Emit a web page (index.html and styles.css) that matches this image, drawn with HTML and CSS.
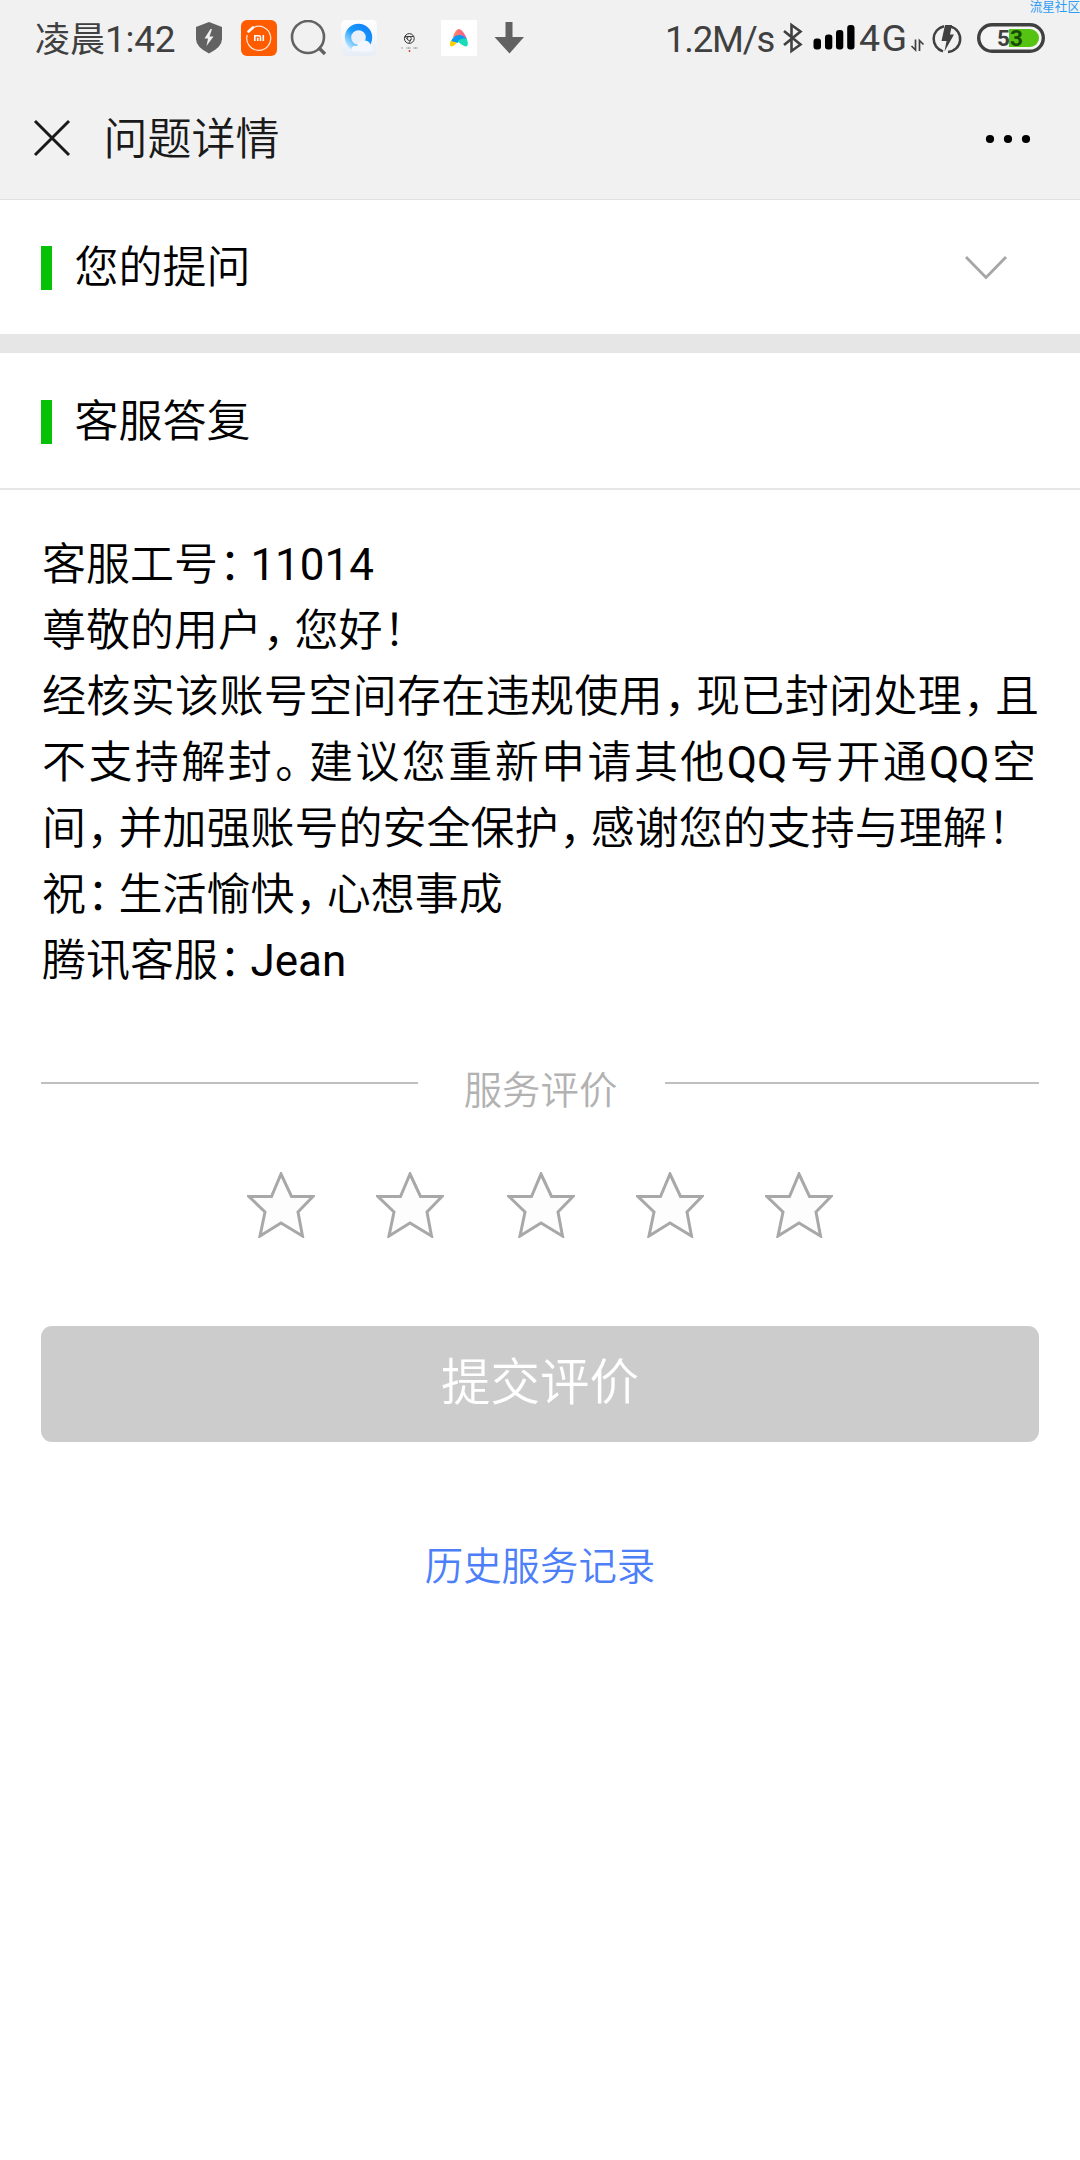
FILE: index.html
```html
<!DOCTYPE html>
<html lang="zh-CN">
<head>
<meta charset="utf-8">
<title>问题详情</title>
<link rel="stylesheet" href="styles.css">
</head>
<body>
<div class="status">
  <span class="time">凌晨<span class="digits">1:42</span></span>
  <svg class="tray" width="330" height="36" viewBox="195 20 330 36">
    <defs>
      <linearGradient id="ring" x1="1" y1="0" x2="0" y2="1"><stop offset="0" stop-color="#1282fb"/><stop offset=".5" stop-color="#189bfb"/><stop offset="1" stop-color="#c4ecff"/></linearGradient>
      <linearGradient id="tile" x1="0" y1="0" x2="0" y2="1"><stop offset="0" stop-color="#fff"/><stop offset="1" stop-color="#e8edf5"/></linearGradient>
      <linearGradient id="peak" x1="0" y1="0" x2="1" y2="0"><stop offset="0" stop-color="#ff8a5c"/><stop offset="1" stop-color="#f5559b"/></linearGradient>
    </defs>
    <path fill="#626262" d="M209 22 222 27V39Q222 47 209 53.500Q196 47 196 39V27Z"/>
    <path fill="#f1f1f1" d="M210.500 29 204.500 38.500H208L206.500 46 213.500 36.500H209.500L212 29Z"/>
    <rect x="241" y="20" width="36" height="36" rx="6" fill="#ff5c00"/>
    <path d="M253.500 27.500A12 12 0 1 1 247.200 35" fill="none" stroke="#ffe7d8" stroke-width="1.200"/>
    <path d="M248.500 31.500 253 27.500" stroke="#fff" stroke-width="2.600" stroke-linecap="round"/>
    <path d="M254.800 41V35.800H259Q260.500 35.800 260.500 37.300V41M257.700 37.800V41M263.300 35V41" fill="none" stroke="#fff" stroke-width="1.600"/>
    <circle cx="308" cy="37" r="16" fill="none" stroke="#626262" stroke-width="2.600"/>
    <path d="M318.500 47.500 325 54" stroke="#626262" stroke-width="3.400"/>
    <rect x="341" y="20" width="36" height="36" rx="5" fill="url(#tile)"/>
    <circle cx="358.500" cy="37.500" r="10.500" fill="#eaf0f8" stroke="url(#ring)" stroke-width="6.400"/>
    <path d="M354 51.500Q351 51 351.500 48Q353 45 357 46Q359 40 365 40.500Q370 41 370.500 45.500Q373 46.500 372.500 49.500Q371.500 51.500 369 51.500Z" fill="#f4f8fe"/>
    <g fill="none" stroke="#333"><circle cx="409.300" cy="38.500" r="4.900" stroke-width="1"/><circle cx="409.300" cy="38.500" r="2" stroke-width=".9"/><path d="M405 36.500H413.500M407.500 39.500 405.500 37M411 39.500 409 43" stroke-width=".9"/></g>
    <path d="M401.500 48H403M406.500 48H411M413.500 48H418" stroke="#999" stroke-width="1.500" stroke-dasharray="1 .5"/>
    <circle cx="409.500" cy="51" r=".9" fill="#d33"/>
    <rect x="441" y="20" width="36" height="36" fill="#fff"/>
    <path d="M453 37Q455.500 29 459 29Q462.500 29 467 39L460 37Z" fill="url(#peak)"/>
    <path d="M450.500 42.500Q453 35 459 35Q464 35 467 39.500Q462 38.500 457.500 43Z" fill="#0a9bf0"/>
    <path d="M450.500 41Q454 41.500 457 42.500Q454 46.500 451.500 46.500Q449 46 450.500 41Z" fill="#ffd000"/>
    <path d="M457.500 41Q462 37.500 466.500 38.500Q468.500 43 467.500 45.500Q466.500 47 464 46Q460 44 457.500 41Z" fill="#17dcb8"/>
    <path d="M505.500 22H512.500V37H524L509.500 53.500 494.500 37H505.500Z" fill="#626262"/>
  </svg>
  <span class="speed">1.2M/s</span>
  <svg class="radio" width="76" height="36" viewBox="781 20 76 36">
    <path d="M784 31 800.500 44.500 791.500 51V25L800.500 31.500 784 45" fill="none" stroke="#404040" stroke-width="2.600"/>
    <g fill="#000"><rect x="813.500" y="38.500" width="7.500" height="11" rx="3"/><rect x="825" y="34.500" width="7.300" height="15" rx="3"/><rect x="836" y="30" width="7.300" height="19.500" rx="3"/><rect x="847.200" y="25" width="7.300" height="24.500" rx="3"/></g>
  </svg>
  <span class="net">4G</span>
  <svg class="power" width="136" height="36" viewBox="910 20 136 36">
    <path d="M915.500 39.500V50L911.500 46M919.500 51V40.500L923.500 44.500" fill="none" stroke="#404040" stroke-width="1.700"/>
    <path d="M944 26.200A13 13 0 0 0 943 51.400M951 26.600A13 13 0 0 1 948 52" fill="none" stroke="#404040" stroke-width="2.500"/>
    <path d="M945 25H952L950 34.500H954L944.500 51.500 946.500 41H941.500Z" fill="#404040"/>
    <rect x="978.700" y="24.700" width="64.600" height="26.600" rx="13.300" fill="#f5f5f5" stroke="#404040" stroke-width="3.400"/>
    <path d="M1009 29H1030A9 9 0 0 1 1030 47H1009Z" fill="#56c313"/>
    <text x="997" y="46" class="charge">5<tspan class="full">3</tspan></text>
  </svg>
  <span class="mark">流星社区</span>
</div>
<header class="bar">
  <svg width="38" height="38" viewBox="0 0 38 38"><path d="M2 2 36 36M36 2 2 36" stroke="#1a1a1a" stroke-width="3"/></svg>
  <h1>问题详情</h1>
  <svg class="more" width="46" height="10" viewBox="0 0 46 10"><circle cx="5" cy="5" r="4.100"/><circle cx="23" cy="5" r="4.100"/><circle cx="41" cy="5" r="4.100"/></svg>
</header>
<section class="head asked">
  <h2>您的提问</h2>
  <svg width="44" height="26" viewBox="0 0 44 26"><path d="M2 2 22 22.500 42 2" fill="none" stroke="#a6a6a6" stroke-width="2.800"/></svg>
</section>
<section class="head reply"><h2>客服答复</h2></section>
<main>
  <div class="answer">
    <p>客服工号<i>：</i><b>11014</b></p>
    <p>尊敬的用户<i>，</i>您好<i>！</i></p>
    <p class="full-line">经核实该账号空间存在违规使用<i>，</i>现已封闭处理<i>，</i>且</p>
    <p class="full-line inset">不支持解封<i>。</i>建议您重新申请其他<b>QQ</b>号开通<b>QQ</b>空</p>
    <p>间<i>，</i>并加强账号的安全保护<i>，</i>感谢您的支持与理解<i>！</i></p>
    <p>祝<i>：</i>生活愉快<i>，</i>心想事成</p>
    <p>腾讯客服<i>：</i><b>Jean</b></p>
  </div>
  <div class="rate"><span class="rule"></span><span class="label">服务评价</span><span class="rule"></span></div>
  <div class="stars">
    <svg class="star" viewBox="0 0 68 66"><path d="M34 2 44.500 24.500H66L51 40 55.500 64 34 51 13 64 18 40 2 24.500H24.500Z"/></svg>
    <svg class="star" viewBox="0 0 68 66"><path d="M34 2 44.500 24.500H66L51 40 55.500 64 34 51 13 64 18 40 2 24.500H24.500Z"/></svg>
    <svg class="star" viewBox="0 0 68 66"><path d="M34 2 44.500 24.500H66L51 40 55.500 64 34 51 13 64 18 40 2 24.500H24.500Z"/></svg>
    <svg class="star" viewBox="0 0 68 66"><path d="M34 2 44.500 24.500H66L51 40 55.500 64 34 51 13 64 18 40 2 24.500H24.500Z"/></svg>
    <svg class="star" viewBox="0 0 68 66"><path d="M34 2 44.500 24.500H66L51 40 55.500 64 34 51 13 64 18 40 2 24.500H24.500Z"/></svg>
  </div>
  <button class="submit">提交评价</button>
  <a class="history">历史服务记录</a>
</main>
</body>
</html>
```
FILE: styles.css
```css
* { box-sizing: border-box; margin: 0; padding: 0; }
body {
  width: 1080px; min-height: 2160px; background: #fff; color: #000;
  font-family: Roboto, "Noto Sans CJK SC", sans-serif; font-weight: 350;
}
svg { display: block; flex: none; }
h1, h2 { font-weight: inherit; font-size: 44px; line-height: 44px; white-space: nowrap; }

.status {
  position: relative; display: flex; align-items: flex-start; height: 78px; padding: 20px 0 0 35px;
  background: #f1f1f1; color: #404040; font-size: 36.500px; font-weight: 400; line-height: 39px; white-space: nowrap;
}
.time { width: 160px; font-size: 35px; }
.digits { font-size: 37px; letter-spacing: -.3px; }
.tray { margin-right: 140px; }
.speed { width: 116px; letter-spacing: -1.200px; }
.net { width: 51px; margin-left: 2px; font-size: 37.500px; line-height: 37px; letter-spacing: 1.500px; }
.charge { font: 700 22.500px Roboto, sans-serif; fill: #404040; }
.full { fill: #174a05; }
.mark { position: absolute; top: 0; right: 0; font-size: 12.600px; line-height: 13px; color: #2e9df5; }

.bar {
  display: flex; align-items: center; height: 122px; padding: 0 49px 2px 33px;
  background: #f1f1f1; border-bottom: 1px solid #e0e0e0; color: #1a1a1a;
}
.bar h1 { margin-left: 32.500px; padding-top: 4px; }
.more { margin-left: auto; margin-top: 2px; }

.head { display: flex; align-items: center; padding-left: 41px; }
.head h2 { flex: 1; padding-left: 22.500px; border-left: 11px solid #07c107; line-height: 45px; height: 44px; }
.asked { height: 153px; padding-top: 1px; padding-right: 72px; border-bottom: 19px solid #e6e6e6; }
.reply { height: 137px; padding-top: 2px; border-bottom: 2px solid #e6e6e6; }

main { display: flex; flex-direction: column; padding: 42px 41px 0; }
.answer { font-size: 44px; line-height: 66px; padding-left: 1px; white-space: nowrap; }
/* Half-width punctuation with its own side space */
.answer i { font-style: normal; font-feature-settings: "halt"; padding: 0 9.400px 0 1px; }
.answer b { font-weight: 400; }
.full-line { text-align: justify; text-align-last: justify; }
.inset { padding-right: 3px; }
.rate { display: flex; align-items: flex-start; height: 48px; margin-top: 75px; }
.rule { width: 377px; height: 2px; margin-top: 13px; background: #bfbfbf; }
.rule:last-child { width: 374px; }
.label { flex: 1; padding-right: 2px; text-align: center; color: #b2b2b2; font-size: 38.400px; line-height: 44px; }
.stars { display: flex; gap: 61.200px; margin-top: 55px; padding-left: 205.500px; }
.star { width: 68px; height: 66px; fill: #fefdfd; stroke: #a8a8a8; stroke-width: 3; }
.star:nth-child(3) { margin-left: 2px; }
.submit {
  height: 116px; margin-top: 88px; padding-bottom: 12px; border: 0; border-radius: 11px;
  background: #ccc; color: #fff; font: inherit; font-size: 49.500px;
}
.history { align-self: center; margin-top: 103px; color: #4d80f8; font-size: 38.400px; line-height: 44px; }
```
